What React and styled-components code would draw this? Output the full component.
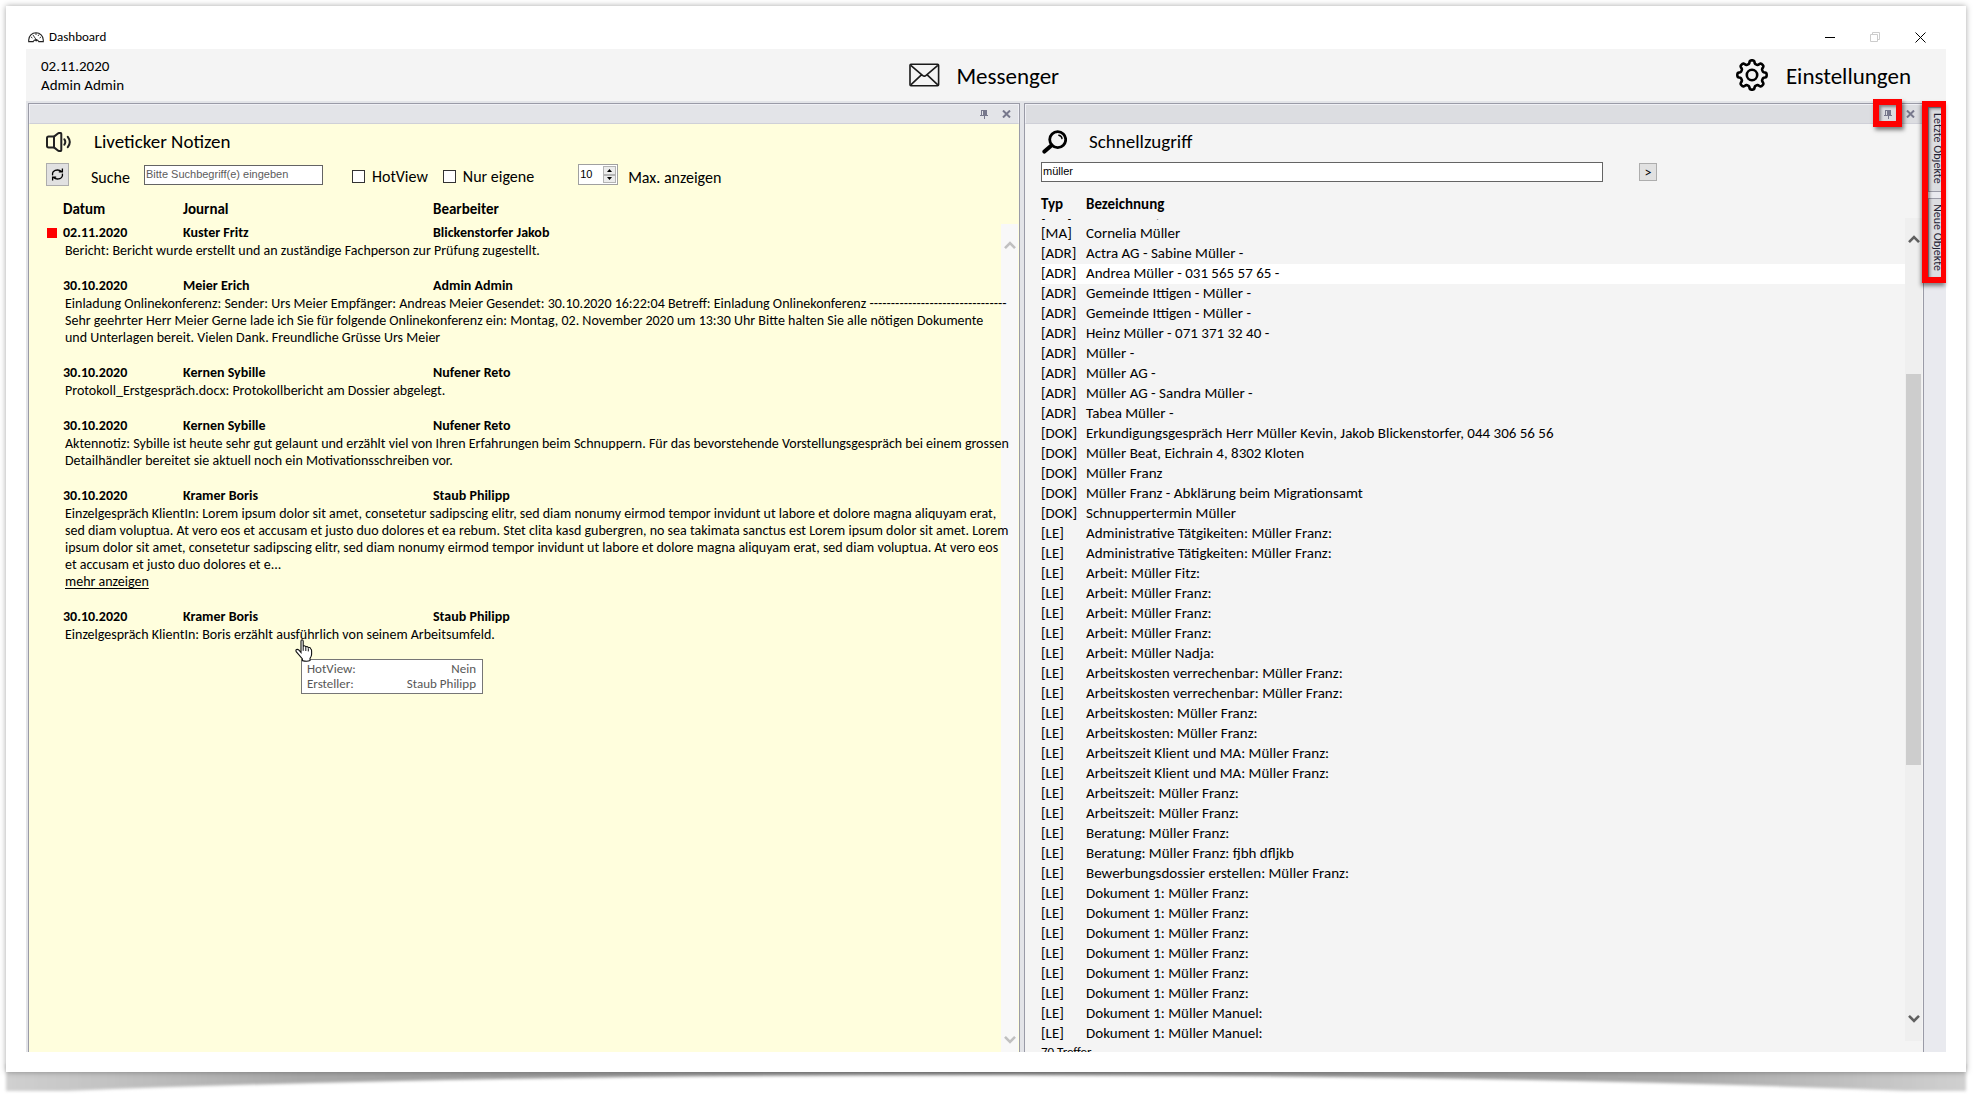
import React, { useState } from "react";
import styled, { createGlobalStyle } from "styled-components";

const GlobalStyle = createGlobalStyle`
  * {
    box-sizing: border-box;
  }

  body {
    margin: 0;
    background: #fff;
    color: #000;
    font-family: Calibri, Carlito, Lato, sans-serif;
    font-size: 14px;
  }

  button, input {
    font: inherit;
    color: inherit;
    margin: 0;
  }
`;

const Page = styled.div`
  height: 100vh;
  display: flex;
  flex-direction: column;
  padding: 6px 14px 0 6px;
  overflow: hidden;
`;

const Sheet = styled.div`
  flex: 1;
  min-height: 0;
  display: flex;
  flex-direction: column;
  padding: 0 20px 20px;
  background: #fff;
  box-shadow: 0 0 6px rgba(0, 0, 0, 0.35);
  position: relative;
`;

const CurlSvg = styled.svg`
  display: block;
  width: 100%;
  height: 29px;
  flex-shrink: 0;
  overflow: visible;
`;

const TitleBar = styled.header`
  height: 43px;
  flex-shrink: 0;
  display: flex;
  align-items: center;
  padding: 19px 20px 0 2px;
  gap: 5px;
  font-size: 13px;
  line-height: 16px;
`;

const WindowButtons = styled.div`
  display: flex;
  gap: 34px;
  margin-left: auto;
`;

const IconButton = styled.button`
  display: flex;
  align-items: center;
  justify-content: center;
  padding: 0;
  border: 0;
  background: none;
`;

const TopBar = styled.div`
  height: 52px;
  flex-shrink: 0;
  display: grid;
  grid-template-columns: 884fr 827fr auto;
  align-items: center;
  padding-right: 35px;
  background: #f4f4f4;
`;

const Session = styled.div`
  padding: 2px 0 0 15px;
  font-size: 15px;
  line-height: 19px;
`;

const TopLink = styled.button`
  display: flex;
  align-items: center;
  gap: ${({ $gap }) => $gap}px;
  padding: 0;
  border: 0;
  background: none;
  font-size: 23px;
  line-height: 28px;
`;

const TopLinkText = styled.span`
  padding-top: 2px;
`;

const Workspace = styled.main`
  flex: 1;
  min-height: 0;
  display: grid;
  grid-template-columns: minmax(0, 996fr) minmax(0, 900fr) 22px;
  grid-template-rows: minmax(0, 1fr);
  padding: 2px 0 0 2px;
  background: #e3e4e8;
`;

const Panel = styled.section`
  min-width: 0;
  display: flex;
  flex-direction: column;
  margin-right: ${({ $gap }) => $gap || 0}px;
  border: 1px solid #9a9ba7;
  border-bottom: 0;
  background: ${({ $color }) => $color};
`;

const PanelBar = styled.div`
  height: 20px;
  flex-shrink: 0;
  display: flex;
  align-items: center;
  justify-content: flex-end;
  gap: ${({ $gap }) => $gap}px;
  padding-right: 7px;
  border: 1px solid #f0f0f5;
  border-bottom-color: #cfd0d8;
  background: ${({ $active }) => ($active ? "#dcdde1" : "#e3e4e8")};
`;

const PanelHead = styled.div`
  display: flex;
  align-items: center;
  gap: 22px;
  height: 36px;
  flex-shrink: 0;
`;

const PanelTitle = styled.h2`
  margin: 0;
  font-size: 19px;
  font-weight: 400;
  line-height: 24px;
`;

const Live = styled.div`
  flex: 1;
  min-height: 0;
  display: flex;
  flex-direction: column;
  padding-left: 17px;
`;

const FilterRow = styled.div`
  display: flex;
  align-items: center;
  height: 29px;
  flex-shrink: 0;
  font-size: 16px;
  line-height: 20px;
`;

const RefreshButton = styled.button`
  width: 23px;
  height: 23px;
  display: flex;
  align-items: center;
  justify-content: center;
  padding: 0;
  margin-right: 22px;
  border: 1px solid #adadad;
  background: #e1e1e1;
`;

const SearchLabel = styled.label`
  width: 53px;
  padding-top: 6px;
`;

const TextBox = styled.input`
  width: ${({ $width }) => $width};
  height: 20px;
  padding: 0 1px 2px;
  border: 1px solid #646464;
  border-radius: 0;
  background: #fff;
  font-family: "Liberation Sans", Arial, sans-serif;
  font-size: 11px;
  outline: 0;

  &::placeholder {
    color: #5c5c5c;
    opacity: 1;
  }
`;

const Checks = styled.div`
  display: flex;
  gap: 15px;
  margin: 0 44px 0 29px;
`;

const CheckLabel = styled.label`
  display: flex;
  align-items: center;
  gap: 7px;
  padding-top: 4px;
`;

const CheckBox = styled.input`
  appearance: none;
  width: 13px;
  height: 13px;
  border: 1px solid #333;
  background: #fff;

  &:checked {
    box-shadow: inset 0 0 0 2px #fff;
    background: #333;
  }
`;

const Stepper = styled.div`
  display: flex;
  width: 40px;
  height: 21px;
  border: 1px solid #a0a0a0;
  background: #fff;
`;

const StepperInput = styled.input`
  width: 23px;
  padding: 0 0 2px 1px;
  border: 0;
  background: none;
  font-family: "Liberation Sans", Arial, sans-serif;
  font-size: 11px;
  outline: 0;
`;

const StepperButtons = styled.div`
  flex: 1;
  display: grid;
  grid-template-rows: 1fr 1fr;
  padding: 1px;
`;

const StepButton = styled.button`
  display: flex;
  align-items: center;
  justify-content: center;
  padding: 0;
  border: 1px solid #b4b4b4;
  background: #ececec;
`;

const MaxLabel = styled.label`
  margin-left: 10px;
  padding-top: 6px;
`;

const NotesArea = styled.div`
  flex: 1;
  min-height: 0;
  display: grid;
  grid-template-columns: minmax(0, 1fr) 17px;
  grid-template-rows: minmax(0, 1fr);
`;

const NotesTable = styled.table`
  display: block;
  line-height: 19px;
  font-size: 14px;
`;

const NotesHead = styled.thead`
  display: block;
  height: 34px;
  padding-top: 11px;
  font-size: 15px;
`;

const NoteRow = styled.tr`
  display: grid;
  grid-template-columns: 17px 120px 250px 1fr;
  align-items: center;
  height: 19px;
`;

const HeadCell = styled.th`
  padding: 0;
  font-weight: 700;
  text-align: left;
  white-space: nowrap;
`;

const Note = styled.tbody`
  display: block;
  padding-bottom: 17px;
`;

const Flag = styled.span`
  display: block;
  width: 10px;
  height: 10px;
  background: #f00;
`;

const NoteBody = styled.tr`
  display: block;
`;

const NoteText = styled.td`
  display: block;
  position: relative;
  padding: 0 0 0 19px;
  line-height: 17px;
  white-space: pre;
`;

const MoreLink = styled.a`
  display: block;
  width: max-content;
  color: inherit;
  text-underline-offset: 2px;
`;

const Tip = styled.dl`
  position: absolute;
  left: 255px;
  top: 33px;
  width: 182px;
  display: grid;
  grid-template-columns: auto auto;
  justify-content: space-between;
  margin: 0;
  padding: 1px 6px 2px 5px;
  border: 1px solid #767676;
  background: #fff;
  color: #575757;
  font-size: 13px;
  line-height: 15px;
`;

const TipValue = styled.dd`
  margin: 0;
  text-align: right;
`;

const Pointer = styled.svg`
  position: absolute;
  left: 249px;
  top: 13px;
`;

const Scroll = styled.div`
  display: grid;
  grid-template-rows: ${({ $rows }) => $rows};
  margin: ${({ $margin }) => $margin};
  background: ${({ $color }) => $color};
`;

const Thumb = styled.div`
  margin: 0 1px;
  background: #cdcdcd;
`;

const Quick = styled.div`
  flex: 1;
  min-height: 0;
  display: flex;
  flex-direction: column;
  padding: 0 1px 0 16px;
  overflow: hidden;
`;

const QuickSearch = styled.form`
  display: grid;
  grid-template-columns: 562fr 18px 229fr;
  column-gap: 36px;
  align-items: center;
  height: 24px;
  flex-shrink: 0;
`;

const GoButton = styled.button`
  height: 18px;
  display: flex;
  align-items: center;
  justify-content: center;
  padding: 0;
  border: 1px solid #adadad;
  background: #e1e1e1;
  font-size: 14px;
`;

const QuickArea = styled.div`
  flex: 1;
  min-height: 0;
  display: grid;
  grid-template-columns: minmax(0, 1fr) 17px;
  grid-template-rows: minmax(0, 1fr);
`;

const HitTable = styled.table`
  min-height: 0;
  display: flex;
  flex-direction: column;
  font-size: 15px;
`;

const HitHead = styled.thead`
  display: block;
  height: 35px;
  flex-shrink: 0;
  padding-top: 11px;
`;

const HitList = styled.tbody`
  flex: 1;
  min-height: 0;
  display: flex;
  flex-direction: column;
  justify-content: flex-end;
  overflow: hidden;
`;

const HitRow = styled.tr`
  display: grid;
  grid-template-columns: 45px 1fr;
  flex-shrink: 0;
  height: 20px;
  line-height: 18px;
  background: ${({ $selected }) => ($selected ? "#fff" : "none")};
`;

const HitCell = styled.td`
  padding: 0;
  white-space: nowrap;
`;

const HitCount = styled.div`
  height: 8px;
  flex-shrink: 0;
  overflow: hidden;
  font-size: 13px;
  line-height: 16px;
`;

const TabsArea = styled.div`
  position: relative;
  display: grid;
  grid-template-rows: minmax(0, 1fr);
`;

const SideTabs = styled.aside`
  padding-top: 4px;
  background: #e9eaef;
  overflow: hidden;
`;

const SideTab = styled.button`
  display: block;
  height: ${({ $height }) => $height}px;
  margin: 0 0 6px 4px;
  padding: 5px 0;
  border: 1px solid #9a9ba7;
  background: #dcdde1;
  color: #222233;
  font-size: 12px;
  line-height: 18px;
  text-align: left;
  white-space: nowrap;
  writing-mode: vertical-rl;
`;

const TabsMark = styled.div`
  position: absolute;
  left: -2px;
  right: 0;
  top: -2px;
  height: 182px;
  border: 6px solid #f00;
  border-right-width: 5px;
  box-shadow: -1px 3px 4px rgba(0, 0, 0, 0.45), inset 2px 2px 3px rgba(0, 0, 0, 0.4);
  pointer-events: none;
`;

const PinMark = styled.span`
  position: relative;
  display: flex;

  &::after {
    content: "";
    position: absolute;
    inset: -11px -10px -8px -11px;
    border: 6px solid #f00;
    box-shadow: 2px 3px 4px rgba(0, 0, 0, 0.5), inset 2px 2px 3px rgba(0, 0, 0, 0.4);
    pointer-events: none;
  }
`;

const GaugeIcon = () => (
  <svg width="16" height="11" viewBox="0 0 16 11" fill="none" stroke="#222">
    <path d="M.7 9.6V8A7.3 7.3 0 0 1 15.3 8v1.6h-4.5a3 3 0 0 0-5.6 0z" strokeWidth="1.1" />
    <path d="M5 3l3.4 5M8 1v2M3 5l1.4 1M13 5l-1.4 1M11 2.5l-1 1.5" strokeWidth=".9" />
    <circle cx="8.2" cy="8.3" r="1.1" fill="#222" stroke="none" />
  </svg>
);

const MailIcon = () => (
  <svg width="31" height="24" viewBox="0 0 31 24" fill="none" stroke="#1a1a1a" strokeWidth="1.6">
    <rect x="1" y="1.3" width="28.6" height="21.4" rx="1" />
    <path d="M1.8 2.4L13.5 12.4a2.8 2.8 0 0 0 3.6 0L28.8 2.4M1.8 21.8l10.6-10M28.8 21.8l-10.6-10" />
  </svg>
);

// The outline runs through eight rounded teeth around the centre
const gearPath = () => {
  const points = [];
  for (let i = 0; i <= 160; i += 1) {
    const a = (i / 160) * Math.PI * 2 - Math.PI / 2;
    const r = 13 + 1.7 * Math.tanh(2.2 * Math.cos(8 * a));
    points.push(`${(16 + r * Math.cos(a)).toFixed(2)} ${(16 + r * Math.sin(a)).toFixed(2)}`);
  }
  return `M${points.join("L")}Z`;
};

const GearIcon = () => (
  <svg width="32" height="32" viewBox="0 0 32 32" fill="none" stroke="#000" strokeLinejoin="round">
    <path d={gearPath()} strokeWidth="2.6" />
    <circle cx="16" cy="16" r="5.2" strokeWidth="2.6" />
  </svg>
);

const SpeakerIcon = () => (
  <svg width="26" height="20" viewBox="0 0 26 20" fill="none" stroke="#222" strokeWidth="2">
    <path d="M8 4.6H2.6Q1 4.6 1 6.2v7.6q0 1.6 1.6 1.6H8z" strokeLinejoin="round" />
    <path d="M8 4.6L12.2 1.3q.6-.4 1.3-.4h.8q1 0 1 1v16.2q0 1-1 1h-.8q-.7 0-1.3-.4L8 15.4" strokeLinejoin="round" />
    <path d="M18.4 7.4q1.8 2.6 0 5.2M21.8 4.8q4 5.2 0 10.4" strokeLinecap="round" />
  </svg>
);

const RefreshIcon = () => (
  <svg width="13" height="13" viewBox="0 0 13 13" fill="none" stroke="#000" strokeWidth="1.3">
    <path d="M1.6 7.4Q1 3.6 4.2 2.4 7.6 1.2 10.6 3.4M11.4.4v3.4H7.8" />
    <path d="M11.4 5.6Q12 9.4 8.8 10.6 5.4 11.8 2.4 9.6M1.6 12.6V9.2h3.6" />
  </svg>
);

const MagnifierIcon = () => (
  <svg width="26" height="24" viewBox="0 0 26 24" fill="none" stroke="#000" strokeLinecap="round">
    <circle cx="16.7" cy="9.6" r="8" strokeWidth="2.8" />
    <path d="M17.8 5.2q3 .7 3.2 3.4" strokeWidth="1.4" />
    <path d="M10.4 15.4L3.4 21.6" strokeWidth="4" />
  </svg>
);

const PinIcon = () => (
  <svg width="8" height="9" viewBox="0 0 8 9" shapeRendering="crispEdges" fill="#77788c">
    <path d="M1 0h6v5h1v1H5v3H4V6H0V5h1zM2 1v4h1V1z" fillRule="evenodd" />
  </svg>
);

const CrossIcon = () => (
  <svg width="9" height="8" viewBox="0 0 9 8" fill="none" stroke="#77788c" strokeWidth="2">
    <path d="M1 .5l7 7M8 .5l-7 7" />
  </svg>
);

const Chevron = ({ down, color }) => (
  <svg width="12" height="10" viewBox="0 0 12 10" fill="none" stroke={color} strokeWidth="2.6">
    <path d={down ? "M1 1.8l5 5 5-5" : "M1 8.2l5-5 5 5"} />
  </svg>
);

const Triangle = ({ down }) => (
  <svg width="5" height="3" viewBox="0 0 5 3" fill="#000">
    <path d={down ? "M0 0h5L2.5 3z" : "M0 3h5L2.5 0z"} />
  </svg>
);

const HandPointer = () => (
  <Pointer width="18" height="24" viewBox="0 0 18 24">
    <path
      d="M6 2.2Q6 .8 7 .8t1.2 1.4v5.6q.2-1 1.2-1t1.4 1.6q.2-1 1.2-.9t1.3 1.7q.2-.9 1.2-.7t1.3 1.5q.8.2.8 1.8v3.4q0 2-1.6 4.2v2.2q-3 1.4-7.6 0v-1.6L1.2 12.6q-.7-1.6.4-2.1T4 11.2l2 2.4z"
      fill="#fff"
      stroke="#111"
      strokeWidth="1.1"
    />
    <path d="M8.2 7.8v4M10.8 8.4v3.6M13.3 9.4v3" stroke="#111" fill="none" />
  </Pointer>
);

const PageCurl = () => (
  <CurlSvg viewBox="0 0 1960 29" preserveAspectRatio="none">
    <defs>
      <linearGradient id="curl">
        <stop offset="0" stopColor="#d0d0d0" />
        <stop offset="0.15" stopColor="#a8a8a8" />
        <stop offset="0.5" stopColor="#858585" />
        <stop offset="0.85" stopColor="#a8a8a8" />
        <stop offset="1" stopColor="#d0d0d0" />
      </linearGradient>
      <filter id="soft" x="-1%" y="-40%" width="102%" height="200%">
        <feGaussianBlur stdDeviation="1.5" />
      </filter>
    </defs>
    <path
      d="M0-8H1960V19H1900Q1500 3 980 3T60 19H0z"
      fill="url(#curl)"
      filter="url(#soft)"
    />
  </CurlSvg>
);

const notes = [
  {
    date: "02.11.2020",
    journal: "Kuster Fritz",
    editor: "Blickenstorfer Jakob",
    flagged: true,
    text: "Bericht: Bericht wurde erstellt und an zuständige Fachperson zur Prüfung zugestellt.",
  },
  {
    date: "30.10.2020",
    journal: "Meier Erich",
    editor: "Admin Admin",
    text: `Einladung Onlinekonferenz: Sender: Urs Meier Empfänger: Andreas Meier Gesendet: 30.10.2020 16:22:04 Betreff: Einladung Onlinekonferenz --------------------------------
Sehr geehrter Herr Meier Gerne lade ich Sie für folgende Onlinekonferenz ein: Montag, 02. November 2020 um 13:30 Uhr Bitte halten Sie alle nötigen Dokumente
und Unterlagen bereit. Vielen Dank. Freundliche Grüsse Urs Meier`,
  },
  {
    date: "30.10.2020",
    journal: "Kernen Sybille",
    editor: "Nufener Reto",
    text: "Protokoll_Erstgespräch.docx: Protokollbericht am Dossier abgelegt.",
  },
  {
    date: "30.10.2020",
    journal: "Kernen Sybille",
    editor: "Nufener Reto",
    text: `Aktennotiz: Sybille ist heute sehr gut gelaunt und erzählt viel von Ihren Erfahrungen beim Schnuppern. Für das bevorstehende Vorstellungsgespräch bei einem grossen
Detailhändler bereitet sie aktuell noch ein Motivationsschreiben vor.`,
  },
  {
    date: "30.10.2020",
    journal: "Kramer Boris",
    editor: "Staub Philipp",
    more: true,
    text: `Einzelgespräch KlientIn: Lorem ipsum dolor sit amet, consetetur sadipscing elitr, sed diam nonumy eirmod tempor invidunt ut labore et dolore magna aliquyam erat,
sed diam voluptua. At vero eos et accusam et justo duo dolores et ea rebum. Stet clita kasd gubergren, no sea takimata sanctus est Lorem ipsum dolor sit amet. Lorem
ipsum dolor sit amet, consetetur sadipscing elitr, sed diam nonumy eirmod tempor invidunt ut labore et dolore magna aliquyam erat, sed diam voluptua. At vero eos
et accusam et justo duo dolores et e...`,
  },
  {
    date: "30.10.2020",
    journal: "Kramer Boris",
    editor: "Staub Philipp",
    hovered: true,
    text: "Einzelgespräch KlientIn: Boris erzählt ausführlich von seinem Arbeitsumfeld.",
  },
];

const hits = [
  ["MA", "Beat Müller, Bern"],
  ["MA", "Cornelia Müller"],
  ["ADR", "Actra AG - Sabine Müller -"],
  ["ADR", "Andrea Müller - 031 565 57 65 -"],
  ["ADR", "Gemeinde Ittigen - Müller -"],
  ["ADR", "Gemeinde Ittigen - Müller -"],
  ["ADR", "Heinz Müller - 071 371 32 40 -"],
  ["ADR", "Müller -"],
  ["ADR", "Müller AG -"],
  ["ADR", "Müller AG - Sandra Müller -"],
  ["ADR", "Tabea Müller -"],
  ["DOK", "Erkundigungsgespräch Herr Müller Kevin, Jakob Blickenstorfer, 044 306 56 56"],
  ["DOK", "Müller Beat, Eichrain 4, 8302 Kloten"],
  ["DOK", "Müller Franz"],
  ["DOK", "Müller Franz - Abklärung beim Migrationsamt"],
  ["DOK", "Schnuppertermin Müller"],
  ["LE", "Administrative Tätgikeiten: Müller Franz:"],
  ["LE", "Administrative Tätigkeiten: Müller Franz:"],
  ["LE", "Arbeit: Müller Fitz:"],
  ["LE", "Arbeit: Müller Franz:"],
  ["LE", "Arbeit: Müller Franz:"],
  ["LE", "Arbeit: Müller Franz:"],
  ["LE", "Arbeit: Müller Nadja:"],
  ["LE", "Arbeitskosten verrechenbar: Müller Franz:"],
  ["LE", "Arbeitskosten verrechenbar: Müller Franz:"],
  ["LE", "Arbeitskosten: Müller Franz:"],
  ["LE", "Arbeitskosten: Müller Franz:"],
  ["LE", "Arbeitszeit Klient und MA: Müller Franz:"],
  ["LE", "Arbeitszeit Klient und MA: Müller Franz:"],
  ["LE", "Arbeitszeit: Müller Franz:"],
  ["LE", "Arbeitszeit: Müller Franz:"],
  ["LE", "Beratung: Müller Franz:"],
  ["LE", "Beratung: Müller Franz: fjbh dfljkb"],
  ["LE", "Bewerbungsdossier erstellen: Müller Franz:"],
  ["LE", "Dokument 1: Müller Franz:"],
  ["LE", "Dokument 1: Müller Franz:"],
  ["LE", "Dokument 1: Müller Franz:"],
  ["LE", "Dokument 1: Müller Franz:"],
  ["LE", "Dokument 1: Müller Franz:"],
  ["LE", "Dokument 1: Müller Franz:"],
  ["LE", "Dokument 1: Müller Manuel:"],
  ["LE", "Dokument 1: Müller Manuel:"],
];

function LiveTicker() {
  const [max, setMax] = useState(10);

  return (
    <Panel $color="#fffedd" $gap={4}>
      <PanelBar $gap={14}>
        <IconButton aria-label="Anheften"><PinIcon /></IconButton>
        <IconButton aria-label="Schliessen"><CrossIcon /></IconButton>
      </PanelBar>
      <Live>
        <PanelHead>
          <SpeakerIcon />
          <PanelTitle>Liveticker Notizen</PanelTitle>
        </PanelHead>
        <FilterRow>
          <RefreshButton aria-label="Aktualisieren"><RefreshIcon /></RefreshButton>
          <SearchLabel htmlFor="note-search">Suche</SearchLabel>
          <TextBox id="note-search" $width="179px" placeholder="Bitte Suchbegriff(e) eingeben" />
          <Checks>
            <CheckLabel><CheckBox type="checkbox" />HotView</CheckLabel>
            <CheckLabel><CheckBox type="checkbox" />Nur eigene</CheckLabel>
          </Checks>
          <Stepper>
            <StepperInput id="max-notes" value={max} onChange={(e) => setMax(Number(e.target.value) || 0)} />
            <StepperButtons>
              <StepButton aria-label="Mehr" onClick={() => setMax(max + 1)}><Triangle /></StepButton>
              <StepButton aria-label="Weniger" onClick={() => setMax(max - 1)}><Triangle down /></StepButton>
            </StepperButtons>
          </Stepper>
          <MaxLabel htmlFor="max-notes">Max. anzeigen</MaxLabel>
        </FilterRow>
        <NotesArea>
          <NotesTable>
            <NotesHead>
              <NoteRow>
                <td />
                <HeadCell>Datum</HeadCell>
                <HeadCell>Journal</HeadCell>
                <HeadCell>Bearbeiter</HeadCell>
              </NoteRow>
            </NotesHead>
            {notes.map((note, i) => (
              <Note key={i}>
                <NoteRow>
                  <td>{note.flagged && <Flag />}</td>
                  <HeadCell>{note.date}</HeadCell>
                  <HeadCell>{note.journal}</HeadCell>
                  <HeadCell>{note.editor}</HeadCell>
                </NoteRow>
                <NoteBody>
                  <NoteText colSpan={4}>
                    {note.text}
                    {note.more && <MoreLink href="#mehr">mehr anzeigen</MoreLink>}
                    {note.hovered && (
                      <>
                        <Tip>
                          <dt>HotView:</dt>
                          <TipValue>Nein</TipValue>
                          <dt>Ersteller:</dt>
                          <TipValue>Staub Philipp</TipValue>
                        </Tip>
                        <HandPointer />
                      </>
                    )}
                  </NoteText>
                </NoteBody>
              </Note>
            ))}
          </NotesTable>
          <Scroll $color="#f8f8f8" $rows="42px 1fr 24px" $margin="35px 1px 0 -1px">
            <IconButton aria-label="Nach oben"><Chevron color="#c0c0c0" /></IconButton>
            <div />
            <IconButton aria-label="Nach unten"><Chevron down color="#c0c0c0" /></IconButton>
          </Scroll>
        </NotesArea>
      </Live>
    </Panel>
  );
}

function QuickAccess() {
  const [query, setQuery] = useState("müller");

  return (
    <Panel $color="#f4f4f4">
      <PanelBar $gap={14} $active>
        <PinMark>
          <IconButton aria-label="Anheften"><PinIcon /></IconButton>
        </PinMark>
        <IconButton aria-label="Schliessen"><CrossIcon /></IconButton>
      </PanelBar>
      <Quick>
        <PanelHead>
          <MagnifierIcon />
          <PanelTitle>Schnellzugriff</PanelTitle>
        </PanelHead>
        <QuickSearch onSubmit={(e) => e.preventDefault()}>
          <TextBox $width="100%" aria-label="Schnellzugriff" value={query} onChange={(e) => setQuery(e.target.value)} />
          <GoButton type="submit">&gt;</GoButton>
        </QuickSearch>
        <QuickArea>
          <HitTable>
            <HitHead>
              <HitRow>
                <HeadCell>Typ</HeadCell>
                <HeadCell>Bezeichnung</HeadCell>
              </HitRow>
            </HitHead>
            <HitList>
              {hits.map(([type, name], i) => (
                <HitRow key={i} $selected={i === 3}>
                  <HitCell>[{type}]</HitCell>
                  <HitCell>{name}</HitCell>
                </HitRow>
              ))}
            </HitList>
          </HitTable>
          <Scroll $color="#efefef" $rows="42px 114fr 390fr 232fr 44px" $margin="34px 0 3px">
            <IconButton aria-label="Nach oben"><Chevron color="#606060" /></IconButton>
            <div />
            <Thumb />
            <div />
            <IconButton aria-label="Nach unten"><Chevron down color="#606060" /></IconButton>
          </Scroll>
        </QuickArea>
        <HitCount>70 Treffer</HitCount>
      </Quick>
    </Panel>
  );
}

function App() {
  return (
    <>
      <GlobalStyle />
      <Page>
        <Sheet>
          <TitleBar>
            <GaugeIcon />
            Dashboard
            <WindowButtons>
              <IconButton aria-label="Minimieren">
                <svg width="11" height="11" viewBox="0 0 11 11" stroke="#000"><path d="M0 5.5h10" /></svg>
              </IconButton>
              <IconButton aria-label="Wiederherstellen">
                <svg width="11" height="11" viewBox="0 0 11 11" fill="none" stroke="#ccc"><path d="M.5 2.5h7v7h-7zM2.5 2.5v-2h7v7h-2" /></svg>
              </IconButton>
              <IconButton aria-label="Schliessen">
                <svg width="11" height="11" viewBox="0 0 11 11" stroke="#000"><path d="M.5.5l10 10M10.5.5l-10 10" /></svg>
              </IconButton>
            </WindowButtons>
          </TitleBar>
          <TopBar>
            <Session>
              <div>02.11.2020</div>
              <div>Admin Admin</div>
            </Session>
            <TopLink $gap={16}><MailIcon /><TopLinkText>Messenger</TopLinkText></TopLink>
            <TopLink $gap={18}><GearIcon /><TopLinkText>Einstellungen</TopLinkText></TopLink>
          </TopBar>
          <Workspace>
            <LiveTicker />
            <QuickAccess />
            <TabsArea>
              <SideTabs>
                <SideTab $height={85}>Letzte Objekte</SideTab>
                <SideTab $height={81}>Neue Objekte</SideTab>
              </SideTabs>
              <TabsMark />
            </TabsArea>
          </Workspace>
        </Sheet>
        <PageCurl />
      </Page>
    </>
  );
}

export default App;
